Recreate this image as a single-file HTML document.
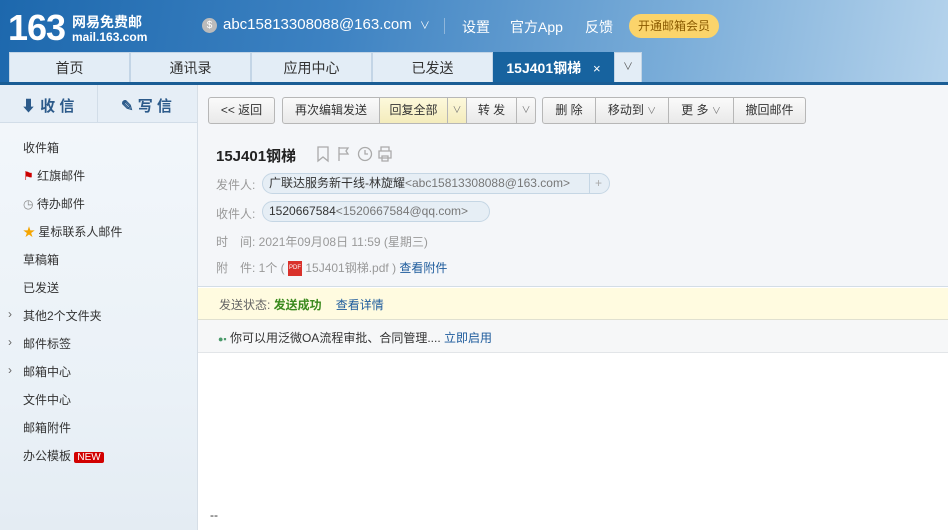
<!DOCTYPE html>
<html><head><meta charset="utf-8"><style>
*{margin:0;padding:0;box-sizing:border-box}
body{width:948px;height:530px;overflow:hidden;font-family:"Liberation Sans","Noto Sans CJK SC",sans-serif;font-size:12px;color:#333;position:relative;background:#fff}
.hd{position:absolute;left:0;top:0;width:948px;height:85px;background:linear-gradient(100deg,#1d68ad 0%,#3d82c2 35%,#79acd8 70%,#b5d3ec 100%)}
.hd:after{content:"";position:absolute;left:0;right:0;bottom:0;height:3px;background:#1a5d95}
.abs{position:absolute}
.tab{position:absolute;top:52px;height:30px;background:#e3edf6;border:1px solid #c3d5e6;border-bottom:none;text-align:center;line-height:30px;font-size:14px;color:#333}
.side{position:absolute;left:0;top:85px;width:198px;height:445px;background:linear-gradient(#f3f7fb,#eaf1f7 70%,#e4ecf3);border-right:1px solid #d6dee6}
.nav{position:absolute;left:23px;font-size:12px;color:#333}
.btn{position:absolute;top:97px;height:27px;border:1px solid #b7b7b7;background:linear-gradient(#fafafa,#e9e9e9);line-height:25px;text-align:center;font-size:12px;color:#333}
.dd{font-size:9px;color:#777}
.lbl{position:absolute;left:216px;color:#999}
.pill{position:absolute;height:21px;border:1px solid #c5d6e4;background:#e6eef5;border-radius:11px;line-height:19px;padding-left:6px;color:#333}
.pill span{color:#777}
</style></head><body>
<div class="hd">
 <div class="abs" style="left:8px;top:7px;font:bold 36px 'Liberation Sans',sans-serif;color:#fff;letter-spacing:-1px">163</div>
 <div class="abs" style="left:72px;top:12px;font-size:14px;color:#fff;font-weight:bold">网易免费邮</div>
 <div class="abs" style="left:72px;top:30px;font-size:12px;color:#fff;font-weight:bold">mail.163.com</div>
 <div class="abs" style="left:202px;top:18px;width:15px;height:15px;border-radius:50%;background:#bbb;color:#fff;font-size:10px;text-align:center;line-height:15px">$</div>
 <div class="abs" style="left:223px;top:16px;font-size:15px;color:#fff">abc15813308088@163.com <span style="font-size:10px;margin-left:4px">∨</span></div>
 <div class="abs" style="left:444px;top:18px;width:1px;height:16px;background:#8fb6db"></div>
 <div class="abs" style="left:462px;top:17px;font-size:14px;color:#fff">设置</div>
 <div class="abs" style="left:510px;top:17px;font-size:14px;color:#fff">官方App</div>
 <div class="abs" style="left:585px;top:17px;font-size:14px;color:#fff">反馈</div>
 <div class="abs" style="left:629px;top:14px;width:90px;height:24px;border-radius:12px;background:#fbd46b;color:#8a5a00;font-size:12px;text-align:center;line-height:24px">开通邮箱会员</div>
 <div class="tab" style="left:9px;width:121px">首页</div>
 <div class="tab" style="left:130px;width:121px">通讯录</div>
 <div class="tab" style="left:251px;width:121px">应用中心</div>
 <div class="tab" style="left:372px;width:121px">已发送</div>
 <div class="tab" style="left:493px;width:121px;background:#17639f;border-color:#17639f;color:#fff;font-weight:bold">15J401钢梯 <span style="font-weight:normal;margin-left:8px;font-size:13px">×</span></div>
 <div class="tab" style="left:614px;width:28px;font-size:10px;color:#555">∨</div>
</div>
<div class="side">
 <div class="abs" style="left:0;top:0;width:197px;height:38px;border-bottom:1px solid #d2dde8;background:#e6eef6"></div>
 <div class="abs" style="left:97px;top:0;width:1px;height:38px;background:#d2dde8"></div>
 <div class="abs" style="left:21px;top:10px;font-size:15px;color:#2c5a8a;font-weight:bold">⬇ 收 信</div>
 <div class="abs" style="left:121px;top:10px;font-size:15px;color:#2c5a8a;font-weight:bold">✎ 写 信</div>
 <div class="nav" style="top:54px">收件箱</div>
 <div class="nav" style="top:82px"><span style="color:#c00">⚑</span> 红旗邮件</div>
 <div class="nav" style="top:110px"><span style="color:#888">◷</span> 待办邮件</div>
 <div class="nav" style="top:138px"><span style="color:#f5a500">★</span> 星标联系人邮件</div>
 <div class="nav" style="top:166px">草稿箱</div>
 <div class="nav" style="top:194px">已发送</div>
 <div class="nav" style="top:222px"><span class="abs" style="left:-15px;color:#666">›</span>其他2个文件夹</div>
 <div class="nav" style="top:250px"><span class="abs" style="left:-15px;color:#666">›</span>邮件标签</div>
 <div class="nav" style="top:278px"><span class="abs" style="left:-15px;color:#666">›</span>邮箱中心</div>
 <div class="nav" style="top:306px">文件中心</div>
 <div class="nav" style="top:334px">邮箱附件</div>
 <div class="nav" style="top:362px">办公模板 <span style="background:#d20000;color:#fff;font-size:10px;padding:0 3px;border-radius:2px">NEW</span></div>
</div>
<div class="abs" style="left:198px;top:85px;width:750px;height:202px;background:#f4f6f9;border-bottom:1px solid #d3dde6"></div>
<div class="btn" style="left:208px;width:67px;border-radius:3px">&lt;&lt; 返回</div>
<div class="btn" style="left:282px;width:98px;border-radius:3px 0 0 3px">再次编辑发送</div>
<div class="btn" style="left:379px;width:69px;background:linear-gradient(#fdf9dc,#f4ecbc)">回复全部</div>
<div class="btn dd" style="left:447px;width:20px;background:linear-gradient(#fdf9dc,#f4ecbc)">∨</div>
<div class="btn" style="left:466px;width:51px">转 发</div>
<div class="btn dd" style="left:516px;width:20px;border-radius:0 3px 3px 0">∨</div>
<div class="btn" style="left:542px;width:54px;border-radius:3px 0 0 3px">删 除</div>
<div class="btn" style="left:595px;width:74px">移动到 <span class="dd">∨</span></div>
<div class="btn" style="left:668px;width:66px">更 多 <span class="dd">∨</span></div>
<div class="btn" style="left:733px;width:73px;border-radius:0 3px 3px 0">撤回邮件</div>
<div class="abs" style="left:216px;top:145px;font-size:15px;font-weight:bold;color:#222">15J401钢梯</div>
<svg class="abs" style="left:314px;top:145px" width="82" height="18" fill="none" stroke="#aaa" stroke-width="1.3">
<path d="M4 2h10v14l-5-4-5 4z"/>
<path d="M25 2v14M25 3h9l-2 3 2 3h-9"/>
<circle cx="51" cy="9" r="6.5"/><path d="M51 5v4h3"/>
<path d="M67 6V2h8v4M65 6h12v7h-12zM68 11h6v5h-6z"/>
</svg>
<div class="lbl" style="top:176px">发件人:</div>
<div class="pill" style="left:262px;top:173px;width:348px">广联达服务新干线-林旋耀<span>&lt;abc15813308088@163.com&gt;</span><span class="abs" style="left:326px;top:0;width:1px;height:19px;background:#c5d6e4"></span><span class="abs" style="left:332px;top:0;color:#aaa">+</span></div>
<div class="lbl" style="top:205px">收件人:</div>
<div class="pill" style="left:262px;top:201px;width:228px">1520667584<span>&lt;1520667584@qq.com&gt;</span></div>
<div class="lbl" style="top:233px">时　间: <span>2021年09月08日 11:59 (星期三)</span></div>
<div class="lbl" style="top:259px">附　件: 1个 ( <span style="display:inline-block;width:14px;height:15px;background:#d9312b;color:#fff;font-size:6px;vertical-align:middle;line-height:15px;text-align:center">PDF</span> 15J401钢梯.pdf ) <span style="color:#1d5b9c">查看附件</span></div>
<div class="abs" style="left:198px;top:288px;width:750px;height:32px;background:#fffbe0;border-bottom:1px solid #e0e0d0;padding:8px 0 0 21px;color:#666">发送状态: <span style="color:#3b8a1e;font-weight:bold">发送成功</span>　<span style="color:#1d5b9c;margin-left:2px">查看详情</span></div>
<div class="abs" style="left:198px;top:320px;width:750px;height:33px;background:#f6f7f8;border-bottom:1px solid #e2e5e8;padding:9px 0 0 20px;color:#333"><span style="color:#4a9a6a;font-size:9px">●▪</span> 你可以用泛微OA流程审批、合同管理.... <span style="color:#1d5b9c">立即启用</span></div>
<div class="abs" style="left:210px;top:508px;color:#333">--</div>
</body></html>
